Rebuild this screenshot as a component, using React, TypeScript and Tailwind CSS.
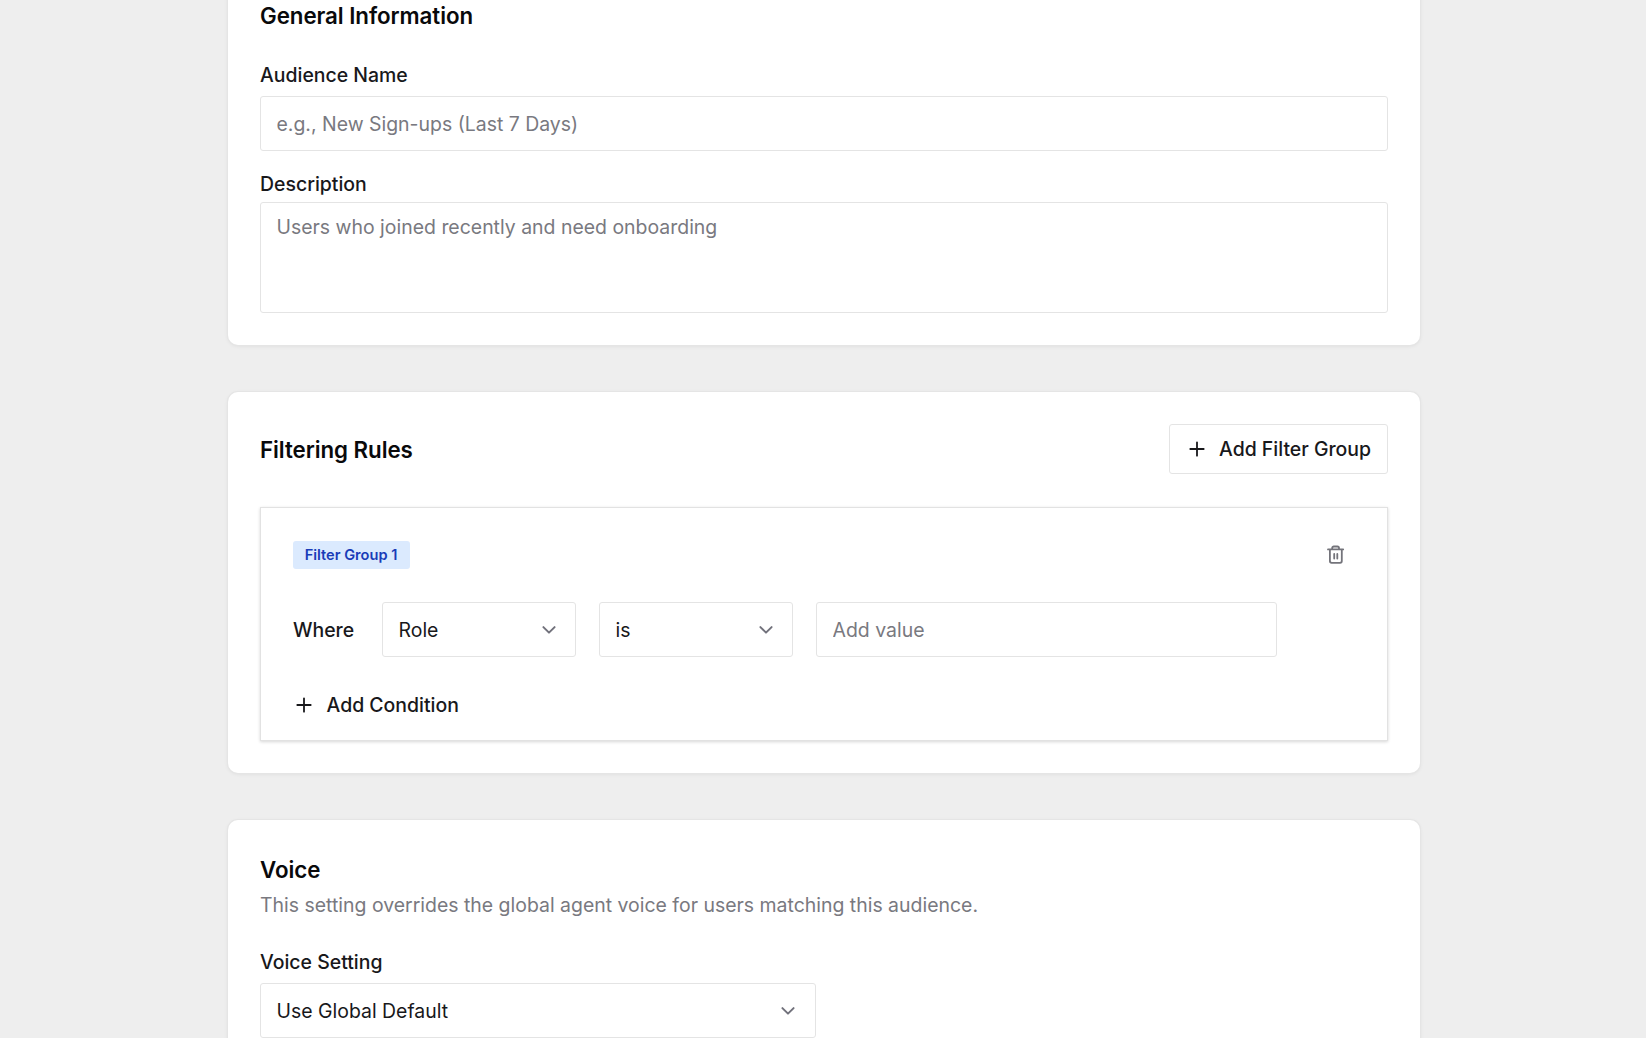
import type { ReactNode } from "react";
import { clsx } from "clsx";

function PlusIcon() {
  return (
    <svg className="h-[22px] w-[22px] shrink-0" viewBox="0 0 22 22" fill="none" stroke="currentColor" strokeWidth="1.8" strokeLinecap="round">
      <path d="M11 4.3v13.4M4.3 11h13.4" />
    </svg>
  );
}

function ChevronIcon() {
  return (
    <svg className="h-[22px] w-[22px] shrink-0 text-zinc-500" viewBox="0 0 22 22" fill="none" stroke="currentColor" strokeWidth="2" strokeLinecap="round" strokeLinejoin="round">
      <path d="M5.4 8.1 11 13.6l5.6-5.5" />
    </svg>
  );
}

function TrashIcon() {
  return (
    <svg className="h-[22px] w-[22px]" viewBox="0 0 22 22" fill="none" stroke="currentColor" strokeWidth="1.8" strokeLinecap="round" strokeLinejoin="round">
      <path d="M3 5.4h15.2M7.2 5.4V4.1c0-.9.7-1.6 1.6-1.6h3.6c.9 0 1.6.7 1.6 1.6v1.3M4.9 5.4v11.7c0 .9.7 1.7 1.7 1.7h8.5c1 0 1.7-.8 1.7-1.7V5.4" />
      <path d="M9.2 9.9v4.6M12.3 9.9v4.6" />
    </svg>
  );
}

function Card({ children, className }: { children: ReactNode; className?: string }) {
  return (
    <section className={clsx("rounded-[10px] bg-white px-8 shadow-[0_0_0_1px_#e5e5e5,0_1px_4px_rgba(0,0,0,0.08)]", className)}>
      {children}
    </section>
  );
}

function Heading({ children }: { children: ReactNode }) {
  return <h2 className="text-[22.3px] leading-8 font-semibold tracking-[-0.05px] text-zinc-950">{children}</h2>;
}

function Label({ children }: { children: ReactNode }) {
  return <label className="block leading-7 font-medium">{children}</label>;
}

function Select({ value, className }: { value: string; className?: string }) {
  return (
    <button type="button" className={clsx("flex h-[55px] items-center justify-between rounded-[3px] border border-[#e4e4e4] pl-[15.5px]", className)}>
      <span className="pt-0.5">{value}</span>
      <ChevronIcon />
    </button>
  );
}

export default function App() {
  return (
    <div className="h-[1038px] overflow-hidden bg-[#eeeeee] font-['Inter',sans-serif] text-[19.46px] text-zinc-900">
      <main className="-mt-8 ml-[228px] flex w-[1192px] flex-col gap-[47px]">
        <Card className="h-[377px] pt-8">
          <Heading>General Information</Heading>
          <div className="mt-[29px]">
            <Label>Audience Name</Label>
            <input
              className="mt-[7px] block h-[55px] w-full rounded-[3px] border border-[#e4e4e4] px-[15.5px] placeholder:text-[#797980]"
              placeholder="e.g., New Sign-ups (Last 7 Days)"
            />
          </div>
          <div className="mt-[19px]">
            <Label>Description</Label>
            <textarea
              className="mt-1 block h-[111px] w-full resize-none rounded-[3px] border border-[#e4e4e4] px-[15.5px] py-[10px] leading-7 placeholder:text-[#797980]"
              placeholder="Users who joined recently and need onboarding"
            />
          </div>
        </Card>

        <Card className="h-[381px] pt-8">
          <div className="flex h-[50px] items-center justify-between">
            <div className="pt-0.5">
              <Heading>Filtering Rules</Heading>
            </div>
            <button type="button" className="flex h-[50px] w-[219px] items-center gap-[11.5px] rounded-[3px] border border-[#e4e4e4] pl-[15.5px] font-medium whitespace-nowrap">
              <PlusIcon />
              <span className="pt-px">Add Filter Group</span>
            </button>
          </div>

          <div className="mt-[33px] h-[234px] border border-[#e2e2e2] px-8 pt-[33px] shadow-[0_1px_3px_rgba(0,0,0,0.16)]">
            <div className="flex h-7 items-center justify-between">
              <span className="flex h-7 w-[117px] items-center justify-center rounded-[3px] bg-blue-100 pt-px pr-px text-[14.6px] font-semibold text-blue-800">
                Filter Group 1
              </span>
              <button type="button" className="mr-2 text-[#74747b]">
                <TrashIcon />
              </button>
            </div>
            <div className="mt-[33px] flex items-center">
              <span className="w-[89px] pt-0.5 font-medium">Where</span>
              <Select value="Role" className="w-[194px] pr-[15px]" />
              <Select value="is" className="ml-[23px] w-[194px] pr-[15px]" />
              <input
                className="ml-[23px] h-[55px] w-[461px] rounded-[3px] border border-[#e4e4e4] px-[15.5px] placeholder:text-[#797980]"
                placeholder="Add value"
              />
            </div>
            <button type="button" className="mt-[34px] flex h-7 items-center gap-[11.5px] font-medium">
              <PlusIcon />
              <span className="pt-px">Add Condition</span>
            </button>
          </div>
        </Card>

        <Card className="h-[300px] shrink-0 pt-[34px]">
          <Heading>Voice</Heading>
          <p className="mt-[5px] leading-7 text-[#797980]">
            This setting overrides the global agent voice for users matching this audience.
          </p>
          <div className="mt-[29px]">
            <Label>Voice Setting</Label>
            <Select value="Use Global Default" className="mt-[7px] w-[556px] pr-4" />
          </div>
        </Card>
      </main>
    </div>
  );
}
